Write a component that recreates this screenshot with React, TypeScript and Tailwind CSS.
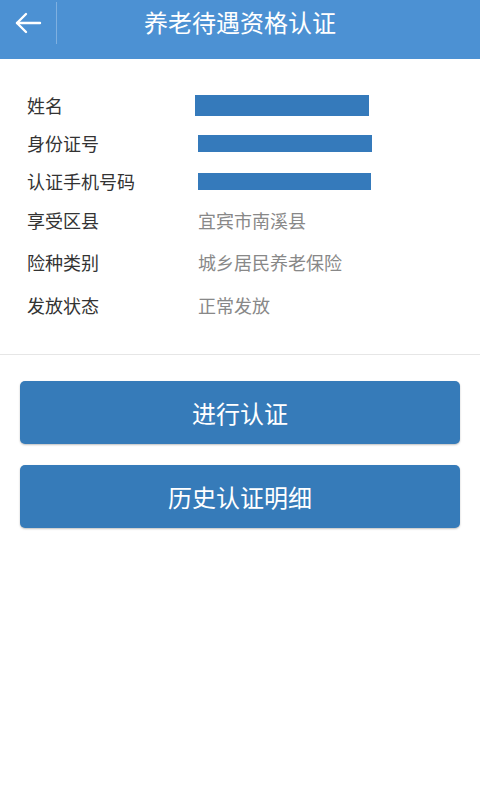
import React from "react";

const font = { fontFamily: '"Noto Sans CJK SC", "Noto Sans", sans-serif' };

export default function App() {
  const rows: { label: string; value?: string; bar?: { w: string; h: string; ml: string } }[] = [
    { label: "姓名", bar: { w: "w-[174px]", h: "h-[21px]", ml: "ml-[-3px]" } },
    { label: "身份证号", bar: { w: "w-[174px]", h: "h-[17px]", ml: "ml-0" } },
    { label: "认证手机号码", bar: { w: "w-[173px]", h: "h-[17px]", ml: "ml-0" } },
    { label: "享受区县", value: "宜宾市南溪县" },
    { label: "险种类别", value: "城乡居民养老保险" },
    { label: "发放状态", value: "正常发放" },
  ];
  const heights = ["h-[38px]", "h-[38px]", "h-[38px]", "h-[41px]", "h-[43px]", "h-[42px]"];
  return (
    <div className="w-[480px] h-[800px] bg-white flex flex-col" style={font}>
      <div className="h-[59px] bg-[#4c91d3] flex items-start relative shrink-0">
        <div className="w-[57px] h-[42px] flex items-center justify-center border-r border-[#7fb0e0] mt-[2px]">
          <svg width="28" height="24" viewBox="0 0 28 24" fill="none" stroke="white" strokeWidth="2.4" strokeLinecap="round" strokeLinejoin="round">
            <path d="M26 12H3" />
            <path d="M12 3L3 12l9 9" />
          </svg>
        </div>
        <div className="absolute left-0 right-0 top-[5px] text-center text-white text-[24px] leading-[34px] pointer-events-none">
          养老待遇资格认证
        </div>
      </div>
      <div className="flex flex-col pb-[28px] border-b border-[#e6e6e6] mt-[-59px]">
        {rows.map((r, i) => (
          <div key={i} className={`${i === 0 ? "pt-[86px]" : ""}`}>
            <div className={`flex items-center ${heights[i]}`}>
              <div className="w-[198px] shrink-0 pl-[27px] text-[18px] text-[#333333]">{r.label}</div>
              {r.bar ? (
                <div className={`${r.bar.w} ${r.bar.h} ${r.bar.ml} bg-[#357abb]`} />
              ) : (
                <div className="text-[18px] text-[#888888]">{r.value}</div>
              )}
            </div>
          </div>
        ))}
      </div>
      <div className="flex flex-col gap-[21px] px-[20px] pt-[26px]">
        <button className="h-[63px] rounded-[5px] bg-[#367bb9] text-white text-[24px] shadow-[0_1px_2px_rgba(0,0,0,0.25)]">
          进行认证
        </button>
        <button className="h-[63px] rounded-[5px] bg-[#367bb9] text-white text-[24px] shadow-[0_1px_2px_rgba(0,0,0,0.25)]">
          历史认证明细
        </button>
      </div>
    </div>
  );
}
